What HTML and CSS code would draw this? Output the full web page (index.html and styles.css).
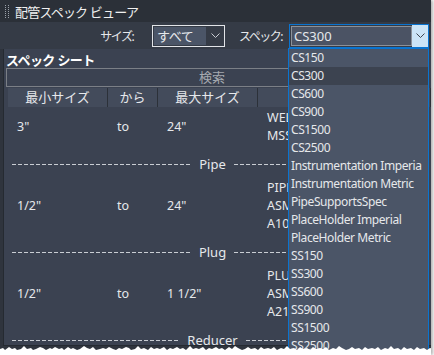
FILE: index.html
```html
<!DOCTYPE html>
<html lang="ja">
<head>
  <meta charset="UTF-8" />
  <title>配管スペック ビューア</title>
  <link rel="stylesheet" href="styles.css">
</head>
<body>
<div class="window">
  <div class="titlebar">
    <svg class="grip" width="4" height="13" viewBox="0 0 4 13">
      <defs>
        <pattern id="dots" width="3" height="2" patternUnits="userSpaceOnUse">
          <rect width="1" height="1" fill="#9aa0a8"/>
        </pattern>
      </defs>
      <rect width="4" height="13" fill="url(#dots)"/>
    </svg>
    <span class="title">配管スペック ビューア</span>
  </div>

  <div class="toolbar">
    <span class="field-label">サイズ:</span>
    <div class="select size-select">
      <span class="value">すべて</span>
      <span class="arrow">
        <svg width="9" height="5" viewBox="0 0 9 5"><path d="M0.5 0.5 L4.5 4.5 L8.5 0.5" fill="none" stroke="#c8ccd2" stroke-width="1"/></svg>
      </span>
    </div>
    <span class="field-label spec-label">スペック:</span>
    <div class="select spec-select">
      <span class="value">CS300</span>
      <span class="arrow">
        <svg width="9" height="5" viewBox="0 0 9 5"><path d="M0.5 0.5 L4.5 4.5 L8.5 0.5" fill="none" stroke="#404650" stroke-width="1"/></svg>
      </span>
      <ul class="dropdown">
        <li>CS150</li>
        <li class="active">CS300</li>
        <li>CS600</li>
        <li>CS900</li>
        <li>CS1500</li>
        <li>CS2500</li>
        <li>Instrumentation Imperial</li>
        <li>Instrumentation Metric</li>
        <li>PipeSupportsSpec</li>
        <li>PlaceHolder Imperial</li>
        <li>PlaceHolder Metric</li>
        <li>SS150</li>
        <li>SS300</li>
        <li>SS600</li>
        <li>SS900</li>
        <li>SS1500</li>
        <li>SS2500</li>
      </ul>
    </div>
  </div>

  <div class="panel">
    <div class="panel-title">スペック シート</div>
    <div class="search">検索</div>
    <div class="sheet">
      <div class="head">
        <div>最小サイズ</div>
        <div>から</div>
        <div>最大サイズ</div>
        <div></div>
      </div>

      <div class="row first">
        <span>3"</span>
        <span>to</span>
        <span>24"</span>
        <span>WELD-ON<br>MSS SP-97</span>
      </div>
      <div class="sep"><span>Pipe</span></div>

      <div class="row">
        <span>1/2"</span>
        <span>to</span>
        <span>24"</span>
        <span>PIPE<br>ASME B36.10<br>A106-B</span>
      </div>
      <div class="sep"><span>Plug</span></div>

      <div class="row">
        <span>1/2"</span>
        <span>to</span>
        <span>1 1/2"</span>
        <span>PLUG<br>ASME B16.11<br>A216</span>
      </div>
      <div class="sep"><span>Reducer</span></div>
    </div>
  </div>

  <svg class="torn" width="434" height="10" viewBox="0 0 434 10" preserveAspectRatio="none">
    <polygon fill="#fff" points="0,4 3,3 5,5 9,2 12,4 15,3 17,5 21,4 24,1 27,4 31,3 33,5 36,4 40,2 43,3 46,5 50,3 52,4 55,2 59,4 62,3 64,5 68,2 71,4 73,3 77,5 80,4 84,1 87,3 90,4 93,2 96,5 100,4 103,3 106,4 109,2 113,4 116,5 119,3 122,4 126,2 129,3 131,5 135,4 138,1 141,4 144,3 148,5 151,2 154,4 157,3 160,4 164,2 167,5 170,3 173,4 177,2 180,4 183,3 186,5 190,1 193,4 196,3 199,4 203,2 206,5 209,3 212,4 216,2 219,4 222,3 225,5 229,2 232,4 235,1 238,3 242,5 245,4 248,2 251,4 255,3 258,5 261,2 264,4 268,3 271,4 274,2 277,5 281,3 284,4 287,1 290,4 294,3 297,5 300,2 303,4 307,3 310,5 313,2 316,4 320,3 323,4 326,2 329,5 333,3 336,4 339,1 342,3 346,5 349,4 352,2 355,4 359,3 362,5 365,2 368,4 372,3 375,4 378,2 381,5 385,3 388,4 391,1 394,4 398,3 401,5 404,2 407,4 411,3 414,5 417,2 420,4 424,3 427,5 430,3 434,4 434,10 0,10"/>
  </svg>
</div>
</body>
</html>
```

FILE: styles.css
```css
body {
  margin: 0;
  background-color: #fff;
  font-family: "Noto Sans", "Noto Sans CJK JP", sans-serif;
  font-size: 12px;
  color: #e6e8eb;
}

.window {
  position: relative;
  width: 431px;
  height: 355px;
  background-color: #2f343d;
  box-shadow: 2px 0 3px rgba(0, 0, 0, 0.3);
  overflow: hidden;
}

/* title bar */
.titlebar {
  height: 22px;
  display: flex;
  align-items: center;
  padding-left: 5px;
  background-color: #2b3038;
}

.title {
  margin-left: 6px;
  font-size: 13px;
  letter-spacing: -0.8px;
  color: #f0f0f0;
}

/* size / spec pickers */
.toolbar {
  height: 27px;
  display: flex;
  align-items: center;
  justify-content: flex-end;
  padding-right: 2px;
  background-color: #353b46;
}

.field-label {
  font-size: 12px;
  letter-spacing: -1.5px;
  color: #e6e8eb;
}

.spec-label {
  margin-left: 14px;
}

.select {
  display: flex;
  box-sizing: border-box;
}

.size-select {
  width: 73px;
  height: 22px;
  margin-left: 19px;
  border: 1px solid #e2e4e8;
}

.size-select .value {
  flex: 1;
  margin: 1px;
  padding-left: 3px;
  background-color: #4b5567;
  line-height: 18px;
  font-size: 13px;
  letter-spacing: -0.5px;
}

.size-select .arrow {
  width: 17px;
  display: flex;
  align-items: center;
  justify-content: center;
}

.spec-select {
  position: relative;
  width: 140px;
  height: 24px;
  margin-left: 7px;
  border: 1px solid #0a74d0;
}

.spec-select .value {
  flex: 1;
  margin: 1px 0 1px 1px;
  padding-left: 2px;
  border: 1px solid #8c9199;
  background-color: #4b5364;
  line-height: 18px;
  font-size: 13px;
}

.spec-select .arrow {
  width: 16px;
  display: flex;
  align-items: center;
  justify-content: center;
  background-color: #cce4f7;
}

/* open list of the spec picker */
.dropdown {
  position: absolute;
  left: -2px;
  top: 23px;
  width: 139px;
  height: 320px;
  margin: 0;
  padding: 0;
  list-style: none;
  border: 1px solid #0a74d0;
  background-color: #4b5567;
  z-index: 2;
}

.dropdown li {
  width: 131px;
  height: 18px;
  line-height: 18px;
  padding-left: 2px;
  white-space: nowrap;
  overflow: hidden;
  font-size: 12px;
  letter-spacing: -0.4px;
}

.dropdown li.active {
  width: 137px;
  background-color: #3c4350;
}

/* spec sheet */
.panel {
  height: 296px;
  margin-left: 3px;
  border-left: 1px solid #252a31;
  border-bottom: 1px solid #252a31;
  background-color: #3b4251;
}

.panel-title {
  height: 18px;
  padding: 1px 0 0 2px;
  font-size: 13px;
  font-weight: bold;
  letter-spacing: -0.6px;
  color: #fff;
}

.search {
  width: 410px;
  height: 17px;
  margin-left: 2px;
  border: 1px solid #7b7f86;
  text-align: center;
  line-height: 17px;
  font-size: 13px;
  color: #a6aab0;
}

.sheet {
  margin: 1px 0 0 4px;
}

.head {
  display: grid;
  grid-template-columns: 100px 50px 100px 1fr;
  height: 19px;
}

.head div {
  background-color: #434b5b;
  border-right: 1px solid #2c3139;
  text-align: center;
  line-height: 19px;
  font-size: 13px;
}

.row {
  display: grid;
  grid-template-columns: 100px 50px 100px 1fr;
  align-items: center;
  padding: 6px 0 10px;
  line-height: 18px;
  font-size: 12.5px;
}

.row.first {
  padding-top: 2px;
}

.row span {
  padding-left: 9px;
  white-space: nowrap;
}

.sep {
  display: flex;
  align-items: center;
  gap: 8px;
  height: 18px;
  margin: 0 18px 0 4px;
  font-size: 13px;
}

.sep::before,
.sep::after {
  content: "";
  flex: 1;
  height: 1px;
  background: repeating-linear-gradient(to right, #c9cdd3 0 4px, transparent 4px 6px);
}

.torn {
  position: absolute;
  left: 0;
  bottom: 0;
  z-index: 3;
}
```
